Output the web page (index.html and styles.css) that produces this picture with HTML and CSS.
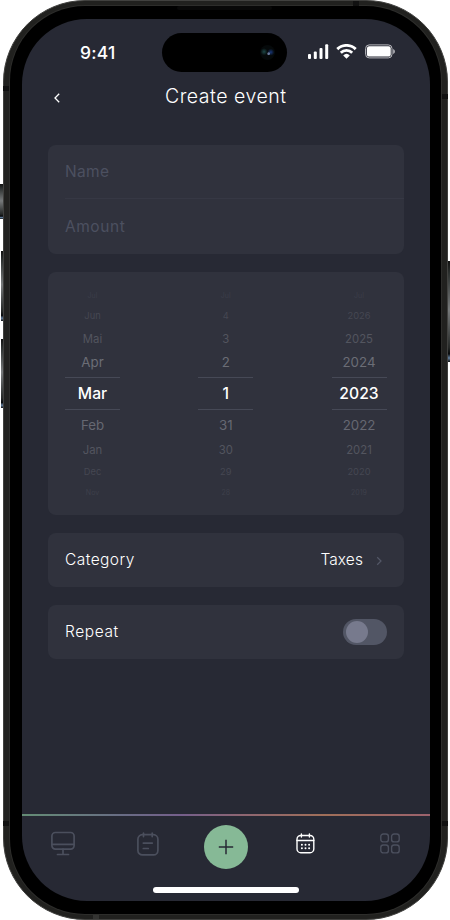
FILE: index.html
```html
<!DOCTYPE html>
<html lang="en">
<head>
<meta charset="utf-8">
<title>Create event</title>
<link rel="stylesheet" href="styles.css">
</head>
<body>
<div class="device">
  <span class="key key-action"></span>
  <span class="key key-up"></span>
  <span class="key key-down"></span>
  <span class="key key-power"></span>
  <div class="frame">
    <span class="speaker"></span>
    <span class="band band-tl"></span><span class="band band-tr"></span>
    <span class="band band-bl"></span><span class="band band-br"></span>
    <span class="band band-top"></span><span class="band band-bottom"></span>
    <div class="bezel">
      <div class="screen">
        <header class="status">
          <span class="clock">9:41</span>
          <span class="island"><i class="lens"></i></span>
          <span class="signals">
            <svg width="21" height="15" viewBox="0 0 21 15" fill="#fff"><rect x="0" y="10" width="3" height="5" rx="1"/><rect x="5.8" y="7.5" width="3" height="7.5" rx="1"/><rect x="11.5" y="4" width="3" height="11" rx="1"/><rect x="17.2" y=".3" width="3" height="14.7" rx="1"/></svg>
            <svg class="wifi" width="21" height="15" viewBox="0 0 21 15" fill="none" stroke="#fff" stroke-width="2.9"><path d="M1.3 5.1a13.3 13.3 0 0 1 18.4 0"/><path d="M4.8 8.7a8.2 8.2 0 0 1 11.4 0"/><path d="M10.5 14.7 7.2 11.4a4.8 4.8 0 0 1 6.6 0z" fill="#fff" stroke="none"/></svg>
            <svg class="battery" width="31" height="15" viewBox="0 0 31 15"><rect x=".6" y=".9" width="26.4" height="13" rx="3.6" fill="none" stroke="#b8b8bd" stroke-width="1"/><rect x="1.9" y="2.2" width="23.8" height="10.4" rx="2.2" fill="#fff"/><path d="M28.2 5v5c1.1-.5 1.7-1.4 1.7-2.5S29.3 5.5 28.2 5z" fill="#b8b8bd"/></svg>
          </span>
        </header>
        <div class="titlebar">
          <svg class="back" width="8" height="12" viewBox="0 0 8 12"><path d="M6.2 1.8 2 6l4.2 4.2" fill="none" stroke="#fff" stroke-width="1.3"/></svg>
          <h1>Create event</h1>
        </div>
        <main>
          <section class="card fields">
            <div class="field name">Name</div>
            <div class="field amount">Amount</div>
          </section>
          <section class="card picker">
            <div class="wheel"><span class="r1">Jul</span><span class="r2">Jun</span><span class="r3">Mai</span><span class="r4">Apr</span><span class="now">Mar</span><span class="r6">Feb</span><span class="r7">Jan</span><span class="r8">Dec</span><span class="r9">Nov</span></div>
            <div class="wheel"><span class="r1">Jul</span><span class="r2">4</span><span class="r3">3</span><span class="r4">2</span><span class="now">1</span><span class="r6">31</span><span class="r7">30</span><span class="r8">29</span><span class="r9">28</span></div>
            <div class="wheel"><span class="r1">Jul</span><span class="r2">2026</span><span class="r3">2025</span><span class="r4">2024</span><span class="now">2023</span><span class="r6">2022</span><span class="r7">2021</span><span class="r8">2020</span><span class="r9">2019</span></div>
          </section>
          <section class="card row">
            <span class="category">Category</span>
            <span class="value">Taxes</span>
            <svg class="more" width="7" height="10" viewBox="0 0 7 10"><path d="M1.2 1.3 5 5 1.2 8.7" fill="none" stroke="#545867" stroke-width="1.2"/></svg>
          </section>
          <section class="card row">
            <span class="repeat">Repeat</span>
            <span class="toggle"></span>
          </section>
        </main>
        <nav>
          <div class="tabs">
            <svg width="24" height="25" viewBox="0 0 24 25" fill="none" stroke="#4b4f5d" stroke-width="1.7" stroke-linecap="round"><rect x=".9" y="1.5" width="22.2" height="16.6" rx="3.5"/><path d="M1 13.4h22M12 18v5M6.5 23.5h11"/></svg>
            <svg width="22" height="24" viewBox="0 0 22 24" fill="none" stroke="#4b4f5d" stroke-width="1.7" stroke-linecap="round"><rect x=".9" y="2.7" width="20" height="20.2" rx="4.5"/><path d="M6.5 1.2v3.4M15.2 1.2v3.4M6.3 11.1h9M6.3 16.5h5"/></svg>
            <span class="add"><svg width="16" height="16" viewBox="0 0 16 16"><path d="M8 .8v14.4M.8 8h14.4" stroke="#272934" stroke-width="1.5"/></svg></span>
            <svg width="19" height="21" viewBox="0 0 19 21" fill="none" stroke="#fff" stroke-width="1.4" stroke-linecap="round"><rect x="1" y="2.5" width="16.8" height="17.2" rx="3.8"/><path d="M1 7.5h16.8M5.4 1v3M13.4 1v3"/><path d="M5.9 11.8h.01M9.5 11.8h.01M13.1 11.8h.01M5.9 15.2h.01M9.5 15.2h.01M13.1 15.2h.01" stroke-width="2"/></svg>
            <svg width="20" height="21" viewBox="0 0 20 21" fill="none" stroke="#4b4f5d" stroke-width="1.4"><rect x=".8" y="1" width="7.6" height="7.9" rx="2.5"/><rect x="11.6" y="1" width="7.6" height="7.9" rx="2.5"/><rect x=".8" y="12" width="7.6" height="7.9" rx="2.5"/><rect x="11.6" y="12" width="7.6" height="7.9" rx="2.5"/></svg>
          </div>
          <div class="home"></div>
        </nav>
      </div>
    </div>
  </div>
</div>
</body>
</html>
```
FILE: styles.css
```css
* { box-sizing: border-box; }
body { margin: 0; background: #fff; font-family: Inter, sans-serif; color: #fff; }
svg { display: block; flex: none; }
.device { position: relative; width: 450px; height: 920px; padding: 0 2.5px 0 3px; overflow: hidden; }
.frame { position: relative; height: 920px; border-radius: 82px; background: #21211f; border: 1px solid #41413f; padding: 5px 5.5px; }
.bezel { height: 100%; padding: 12.5px 11.5px 12px 12.5px; background: #000; border-radius: 75px; box-shadow: 0 0 0 1px #2d2d2b; }
.screen { height: 882.5px; border-radius: 65px; background: #272934; overflow: hidden; display: flex; flex-direction: column; }

.key { position: absolute; width: 5px; background: linear-gradient(#111, #2c302f 12%, #777a7b 48%, #252827 86%, #07090b 92%, #64809f 96%, #111); }
.key-action { left: 0; top: 184px; height: 35px; }
.key-up { left: 1px; top: 251px; height: 70px; }
.key-down { left: 1px; top: 339px; height: 69px; }
.key-power { right: 0; top: 261px; height: 101px; }
.speaker { position: absolute; top: 5px; left: 173px; width: 95px; height: 4px; background: #080808; border-radius: 2px; }
.band { position: absolute; width: 6px; height: 5px; background: #111; }
.band-tl { left: -1px; top: 85px; }
.band-tr { right: -1px; top: 93px; }
.band-bl { left: -1px; top: 820px; }
.band-br { right: -1px; top: 820px; }
.band-top { left: 349px; top: 0; }
.band-bottom { left: 89px; bottom: 0; height: 4px; background: #343432; }

.status { height: 68px; padding: 14px 33px 0 58px; display: flex; align-items: flex-start; }
.clock { width: 82px; padding-top: 9px; font-size: 17.5px; line-height: 22px; font-weight: 550; letter-spacing: .25px; }
.island { width: 125px; height: 39px; border-radius: 20px; background: #000; display: flex; align-items: center; justify-content: flex-end; padding-right: 12px; }
.lens { width: 15px; height: 15px; border-radius: 50%; background: radial-gradient(circle at 58% 58%, #68789a 0 7%, transparent 15%), radial-gradient(circle at 72% 48%, #193778 0, transparent 26%), radial-gradient(circle at 27% 45%, #1d4747 0, transparent 26%), #05090a; }
.signals { display: flex; flex: 1; padding: 11.5px 0 0 21px; }
.wifi { margin-left: 7px; }
.battery { margin-left: 8px; }

.titlebar { height: 58px; display: grid; grid-template-columns: 1fr; }
.titlebar > * { grid-area: 1 / 1; }
.back { margin: 5px 0 0 31px; }
h1 { margin: -2.5px 0 0; text-align: center; font-size: 19.5px; line-height: 24px; font-weight: 350; letter-spacing: .5px; color: #fff; }
main { flex: 1; padding: 0 26px; display: flex; flex-direction: column; gap: 18px; }
.card { background: #30323d; border-radius: 8px; }
.fields { height: 109.5px; padding-left: 17px; margin-bottom: -.5px; }
.field { height: 54.5px; line-height: 53px; font-size: 15.5px; font-weight: 400; color: #4c5060; letter-spacing: .35px; }
.name { border-bottom: 1px solid #363844; }
.amount { line-height: 55px; letter-spacing: .55px; }
.picker { height: 243px; padding: 14px 17px 0; display: flex; justify-content: space-between; }
.wheel { width: 55px; display: flex; flex-direction: column; text-align: center; }
.wheel span { display: block; }
.r1 { height: 19px; line-height: 19px; font-size: 7px; color: #3b3d49; }
.r2 { height: 21px; line-height: 21px; font-size: 9.3px; color: #454752; }
.r3 { height: 25px; line-height: 26px; font-size: 11.3px; color: #53555f; }
.r4 { height: 26px; line-height: 23px; font-size: 13.3px; color: #6b6d76; }
.now { height: 33px; line-height: 31px; font-size: 15.7px; font-weight: 450; color: #fff; border: solid #464956; border-width: 1px 0; }
.r6 { height: 31px; line-height: 31px; font-size: 13.3px; color: #666872; }
.r7 { height: 19px; line-height: 19px; font-size: 11.3px; color: #53555f; }
.r8 { height: 24px; line-height: 24px; font-size: 9.3px; color: #454752; }
.r9 { height: 16px; line-height: 17px; font-size: 7px; color: #3e404b; }
.row { height: 54px; padding: 0 17px 1px; display: flex; align-items: center; font-size: 15.5px; font-weight: 350; letter-spacing: .45px; }
.row > span:first-child { flex: 1; }
.repeat { letter-spacing: .6px; }
.value { margin-right: 12.5px; letter-spacing: .1px; }
.more { margin: 3px 4px 0 0; }
.toggle { width: 43.5px; height: 26px; border-radius: 13px; background: #525665; padding: 2px 3px; margin-top: 1px; }
.toggle::before { content: ""; display: block; width: 22px; height: 22px; border-radius: 50%; background: #777a8d; }

nav { height: 87.5px; border-top: 2px solid; border-image: linear-gradient(90deg, #648d75, #696c85 25%, #755f8b 39%, #8e6672 54%, #a06f59 74%, #9c626d) 1; }
.tabs { height: 62px; padding: 0 29px; display: grid; grid-template-columns: 86px 67px 91.5px 84.5px 20px; align-items: center; }
.tabs > svg { margin-bottom: 6px; }
.add { width: 44px; height: 44px; border-radius: 50%; background: #86b996; display: flex; align-items: center; justify-content: center; }
.home { width: 146px; height: 6px; border-radius: 3px; background: #fff; margin: 9px auto 0; }
```
